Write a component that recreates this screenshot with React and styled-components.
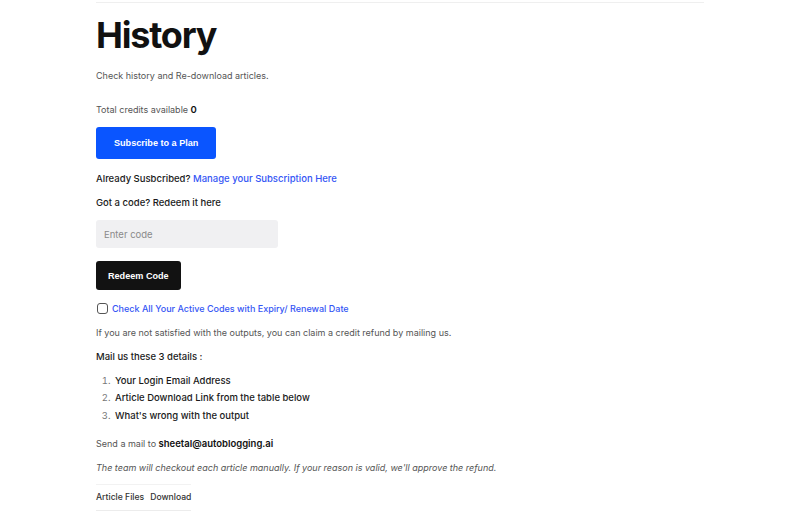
import React from "react";
import styled, { createGlobalStyle } from "styled-components";

const Global = createGlobalStyle`
  html, body { margin: 0; padding: 0; background: #fff; }
  body { font-family: Inter, "Noto Sans", sans-serif; color: #222; -webkit-font-smoothing: antialiased; }
  * { box-sizing: border-box; }
`;

const Page = styled.main`
  width: 608px;
  margin: 2px auto 0;
  border-top: 1px solid #efefef;
  display: flex;
  flex-direction: column;
  align-items: flex-start;
`;

const Title = styled.h1`
  margin: 14px 0 0;
  font-size: 36px;
  line-height: 36px;
  font-weight: 700;
  letter-spacing: -1.2px;
  color: #111;
`;

const Text = styled.p`
  margin: ${(p) => p.$mt ?? 9}px 0 0;
  font-size: ${(p) => (p.$strong ? 9.5 : 9)}px;
  line-height: 15px;
  font-weight: ${(p) => (p.$strong ? 500 : 400)};
  font-style: ${(p) => (p.$italic ? "italic" : "normal")};
  color: ${(p) => (p.$strong ? "#1a1a1a" : "#555")};
`;

const Bold = styled.b`
  font-weight: 600;
  font-size: 9.5px;
  color: #111;
`;

const Link = styled.a`
  color: #3556f5;
  text-decoration: none;
  font-weight: 500;
`;

const Button = styled.button`
  margin-top: ${(p) => p.$mt}px;
  height: ${(p) => p.$h}px;
  padding: 0 ${(p) => p.$px}px;
  border: none;
  border-radius: 3px;
  background: ${(p) => p.$bg};
  color: #fff;
  font-family: "Liberation Sans", Arial, sans-serif;
  font-size: 9.1px;
  font-weight: 700;
  cursor: pointer;
`;

const Input = styled.input`
  margin-top: 10.5px;
  width: 182px;
  height: 28px;
  border: none;
  border-radius: 3px;
  background: #f0f0f2;
  padding: 0 8px;
  font-family: Inter, sans-serif;
  font-size: 9.5px;
  color: #222;
  outline: none;
  caret-color: #3556f5;
  &::placeholder { color: #8a8a8a; }
`;

const CheckRow = styled.label`
  margin-top: 10.5px;
  display: flex;
  align-items: center;
  gap: 4px;
  height: 15px;
  font-size: 9px;
  font-weight: 500;
  color: #3556f5;
`;

const Box = styled.span`
  width: 11px;
  height: 11px;
  border: 1.2px solid #555;
  border-radius: 3px;
  margin-left: 1px;
`;

const List = styled.ol`
  margin: 9px 0 0;
  padding: 0 0 0 17px;
  display: flex;
  flex-direction: column;
  gap: 2.5px;
  font-size: 9.5px;
  line-height: 15px;
  li { color: #777; padding-left: 2px; }
  li span { color: #1a1a1a; font-weight: 500; }
`;

const Table = styled.table`
  margin-top: 9.5px;
  border-collapse: collapse;
  font-size: 8.6px;
  th {
    font-weight: 500;
    color: #333;
    text-align: left;
    padding: 5px 6px 5px 0;
    line-height: 15px;
    border-top: 1px solid #f2f2f2;
    border-bottom: 1px solid #ececec;
  }
  th:last-child { padding-right: 0; }
`;

export default function App() {
  return (
    <>
      <Global />
      <Page>
        <Title>History</Title>
        <Text $mt={14.5}>Check history and Re-download articles.</Text>
        <Text $mt={19}>
          Total credits available <Bold>0</Bold>
        </Text>
        <Button $mt={10.5} $h={32} $px={18} $bg="#0a55ff">Subscribe to a Plan</Button>
        <Text $mt={11.5} $strong>
          Already Susbcribed? <Link href="#">Manage your Subscription Here</Link>
        </Text>
        <Text $mt={9} $strong>Got a code? Redeem it here</Text>
        <Input placeholder="Enter code" />
        <Button $mt={13} $h={29} $px={12} $bg="#121212">Redeem Code</Button>
        <CheckRow>
          <Box />
          Check All Your Active Codes with Expiry/ Renewal Date
        </CheckRow>
        <Text>If you are not satisfied with the outputs, you can claim a credit refund by mailing us.</Text>
        <Text $strong>Mail us these 3 details :</Text>
        <List>
          <li><span>Your Login Email Address</span></li>
          <li><span>Article Download Link from the table below</span></li>
          <li><span>What's wrong with the output</span></li>
        </List>
        <Text $mt={13}>
          Send a mail to <Bold>sheetal@autoblogging.ai</Bold>
        </Text>
        <Text $italic>The team will checkout each article manually. If your reason is valid, we'll approve the refund.</Text>
        <Table>
          <thead>
            <tr>
              <th>Article Files</th>
              <th>Download</th>
            </tr>
          </thead>
        </Table>
      </Page>
    </>
  );
}
